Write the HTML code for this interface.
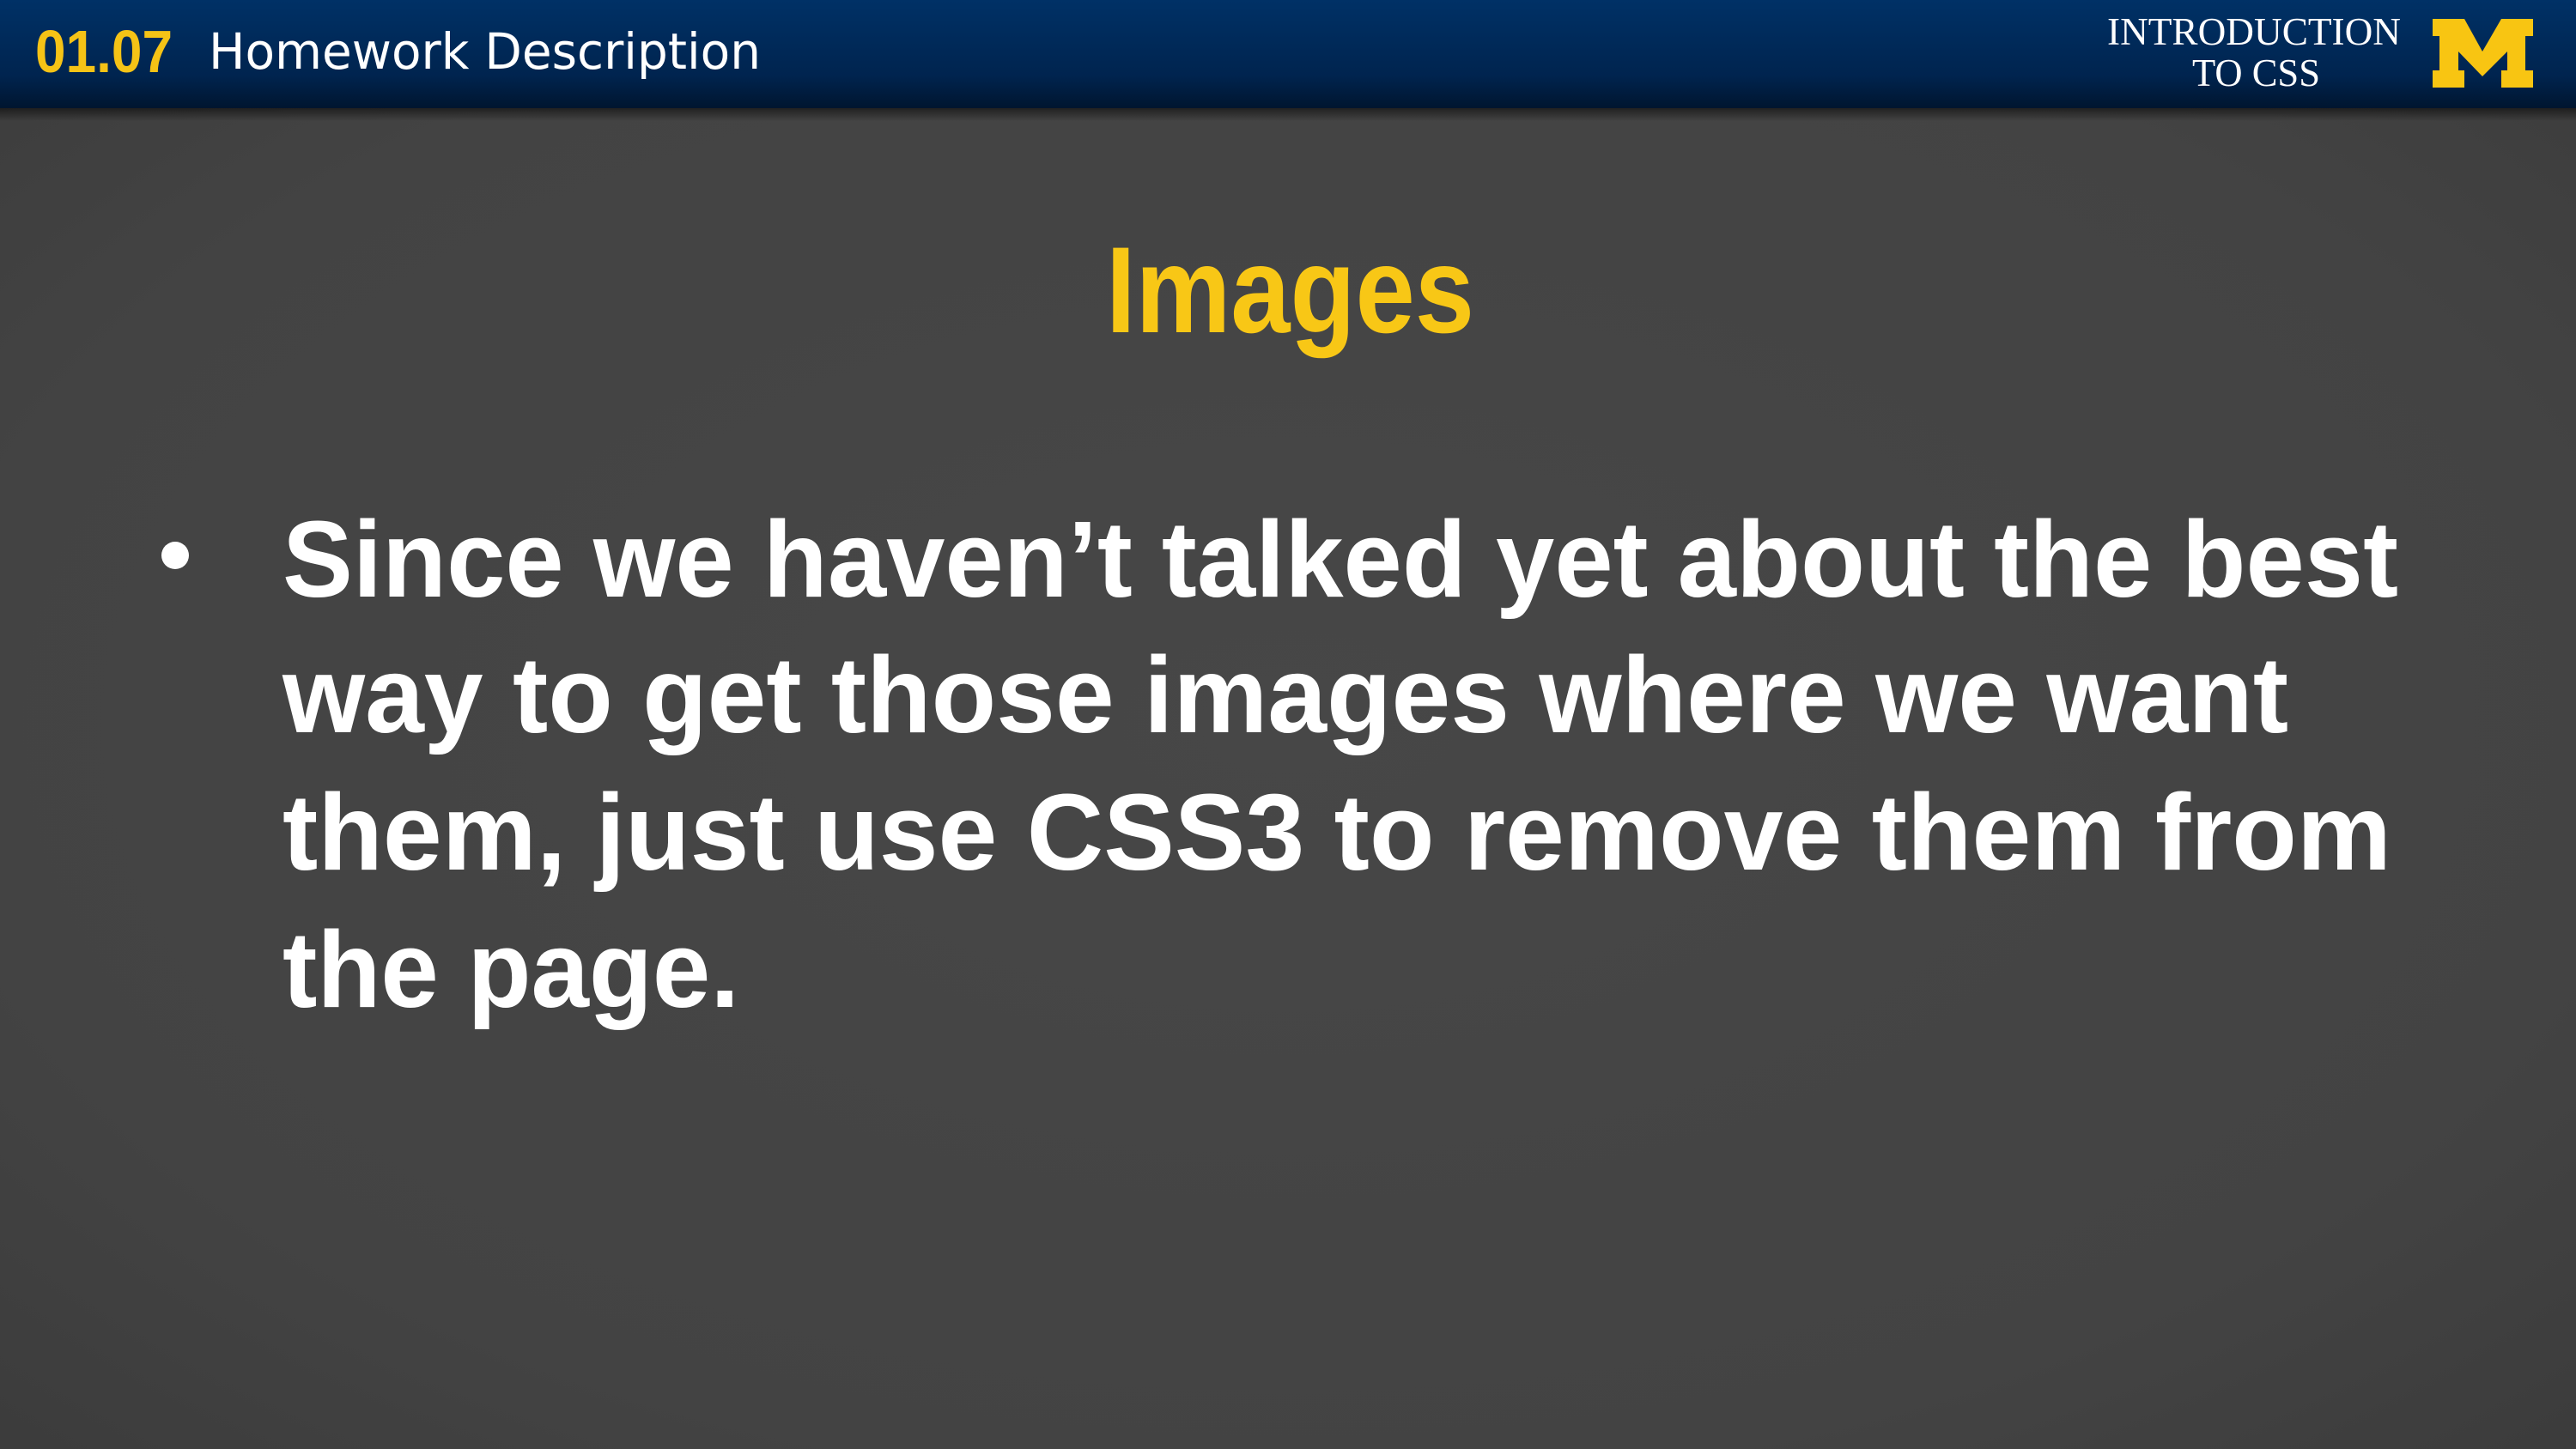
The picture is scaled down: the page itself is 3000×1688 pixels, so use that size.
<!DOCTYPE html>
<html><head><meta charset="utf-8"><style>
html,body{margin:0;padding:0;width:3000px;height:1688px;overflow:hidden;background:#434343}
</style></head><body>
<svg width="3000" height="1688" viewBox="0 0 3000 1688" xmlns="http://www.w3.org/2000/svg" style="display:block">
<defs>
<radialGradient id="bg" cx="50%" cy="50%" r="75%">
<stop offset="0" stop-color="#474747"/><stop offset="0.7" stop-color="#434343"/><stop offset="1" stop-color="#3a3a3a"/>
</radialGradient>
<linearGradient id="hd" x1="0" y1="0" x2="0" y2="1">
<stop offset="0" stop-color="#003166"/><stop offset="0.7" stop-color="#00244f"/><stop offset="1" stop-color="#00152f"/>
</linearGradient>
<linearGradient id="sh" x1="0" y1="0" x2="0" y2="1">
<stop offset="0" stop-color="#000" stop-opacity="0.55"/><stop offset="1" stop-color="#000" stop-opacity="0"/>
</linearGradient>
</defs>
<rect width="3000" height="1688" fill="url(#bg)"/>
<rect y="125" width="3000" height="16" fill="url(#sh)"/>
<rect width="3000" height="126" fill="url(#hd)"/>
<text x="41" y="84" font-family="Liberation Sans Narrow, Liberation Sans, sans-serif" font-weight="bold" font-size="70" fill="#f5c316" textLength="160" lengthAdjust="spacingAndGlyphs">01.07</text>
<text x="243" y="80" font-family="DejaVu Sans, Liberation Sans, sans-serif" font-size="58" fill="#fff" textLength="643" lengthAdjust="spacingAndGlyphs">Homework Description</text>
<text x="2454" y="52" font-family="Liberation Serif, serif" font-size="45" fill="#fff" textLength="342" lengthAdjust="spacingAndGlyphs">INTRODUCTION</text>
<text x="2553" y="100" font-family="Liberation Serif, serif" font-size="45" fill="#fff" textLength="149" lengthAdjust="spacingAndGlyphs">TO CSS</text>
<polygon transform="translate(2833,22)" fill="#f8c512" points="0,0 37,0 58,38 80,0 117,0 117,20 108,20 108,60 117,60 117,80 80,80 80,60 87,60 87,38 58,67 30,38 30,60 37,60 37,80 0,80 0,60 8,60 8,20 0,20"/>
<text x="1288" y="387" font-family="Liberation Sans, sans-serif" font-weight="bold" font-size="143" fill="#f8c716" textLength="429" lengthAdjust="spacingAndGlyphs">Images</text>
<circle cx="204" cy="647" r="16" fill="#fff"/>
<g font-family="Liberation Sans, sans-serif" font-weight="bold" font-size="126" fill="#fff">
<text x="329" y="695" textLength="2464" lengthAdjust="spacingAndGlyphs">Since we haven’t talked yet about the best</text>
<text x="329" y="853" textLength="2336" lengthAdjust="spacingAndGlyphs">way to get those images where we want</text>
<text x="329" y="1013" textLength="2456" lengthAdjust="spacingAndGlyphs">them, just use CSS3 to remove them from</text>
<text x="329" y="1173" textLength="532" lengthAdjust="spacingAndGlyphs">the page.</text>
</g>
</svg>
</body></html>
